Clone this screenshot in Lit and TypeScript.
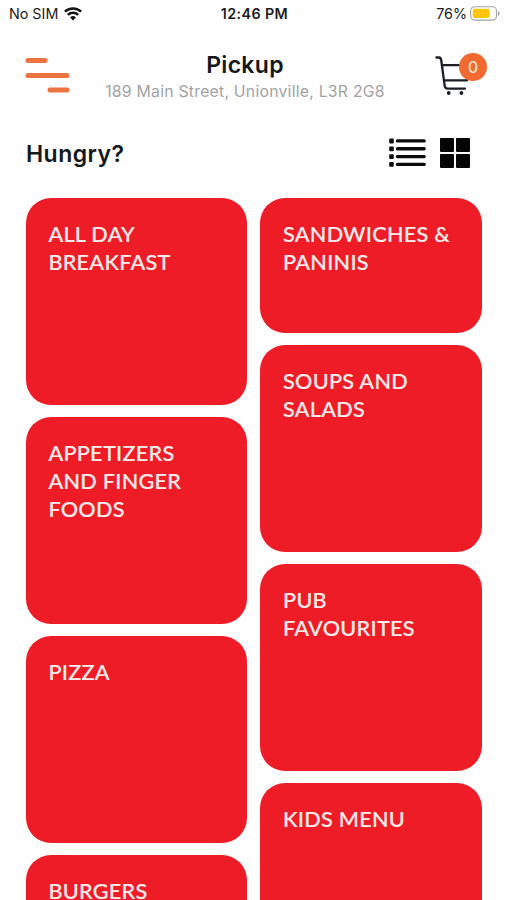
import { LitElement, html, css, svg } from "lit";
import { customElement, property } from "lit/decorators.js";
import { classMap } from "lit/directives/class-map.js";

interface Category {
  lines: string[];
  short?: boolean;
}

const LEFT: Category[] = [
  { lines: ["ALL DAY", "BREAKFAST"] },
  { lines: ["APPETIZERS", "AND FINGER", "FOODS"] },
  { lines: ["PIZZA"] },
  { lines: ["BURGERS"] },
];

const RIGHT: Category[] = [
  { lines: ["SANDWICHES &", "PANINIS"], short: true },
  { lines: ["SOUPS AND", "SALADS"] },
  { lines: ["PUB", "FAVOURITES"] },
  { lines: ["KIDS MENU"] },
];

@customElement("status-bar")
class StatusBar extends LitElement {
  static styles = css`
    :host {
      display: grid;
      grid-template-columns: 1fr auto 1fr;
      align-items: center;
      height: 27px;
      padding: 0 7px 0 9px;
      font: 400 14.3px/27px Inter, sans-serif;
      color: #1c1c1e;
    }
    .side { display: flex; align-items: center; gap: 6px; }
    .end { justify-content: flex-end; gap: 3px; }
    .time { font-weight: 600; letter-spacing: 0.4px; }
    svg { display: block; }
  `;
  render() {
    return html`
      <div class="side">
        <span>No SIM</span>
        <svg width="18" height="14" viewBox="0 0 18 14" fill="none" stroke="#111" stroke-width="2.5">
          <path d="M.9 4.7a11.6 11.6 0 0 1 16.2 0" />
          <path d="M3.8 7.9a7.5 7.5 0 0 1 10.4 0" />
          <path d="M9 13.4 6.1 10.4a4.2 4.2 0 0 1 5.8 0Z" fill="#111" stroke="none" />
        </svg>
      </div>
      <span class="time">12:46 PM</span>
      <div class="side end">
        <span>76%</span>
        <svg width="30" height="15" viewBox="0 0 30 15">
          <rect x=".7" y=".7" width="25.8" height="13.4" rx="4" fill="#fff" stroke="#a3a3a3" stroke-width="1.1" />
          <rect x="2.7" y="2.7" width="17" height="9.4" rx="2" fill="#fbc60c" />
          <path d="M28 5v5c2-.9 2-4.1 0-5Z" fill="#999" />
        </svg>
      </div>
    `;
  }
}

@customElement("category-card")
class CategoryCard extends LitElement {
  @property({ attribute: false }) category!: Category;
  static styles = css`
    :host { display: block; }
    .card {
      box-sizing: border-box;
      height: 206.5px;
      padding: 22.3px 0 0 22.7px;
      border-radius: 25px;
      background: #ed1c26;
      color: #ffeceb;
      font: 500 21.6px/28px Lato, sans-serif;
      letter-spacing: 0.3px;
      -webkit-text-stroke: 0.2px #ffeceb;
      white-space: nowrap;
    }
    .short { height: 134.5px; }
    .line { display: block; }
  `;
  render() {
    return html`<div class=${classMap({ card: true, short: !!this.category.short })}>
      ${this.category.lines.map((l) => html`<span class="line">${l}</span>`)}
    </div>`;
  }
}

@customElement("app-root")
class AppRoot extends LitElement {
  static styles = css`
    :host {
      display: block;
      height: 900px;
      overflow: hidden;
      background: #fefefe;
      font-family: Inter, sans-serif;
    }
    svg { display: block; }
    .header {
      display: grid;
      grid-template-columns: 70px 1fr 70px;
      height: 84px;
      padding: 0 17px 0 0;
    }
    .menu { padding: 30px 0 0 25px; }
    .title { padding-top: 24px; text-align: center; white-space: nowrap; }
    h1 { margin: 0; font: 600 23px/29px Inter, sans-serif; letter-spacing: 0.3px; color: #15171a; }
    .address { font-size: 15.8px; line-height: 24px; letter-spacing: 0.23px; color: #a3a3a3; }
    .cart { position: relative; padding: 29px 0 0 15px; }
    .badge {
      position: absolute;
      top: 26px;
      right: 3px;
      width: 28px;
      height: 28px;
      border-radius: 50%;
      background: #f26a31;
      color: #fff3ea;
      font-size: 16px;
      line-height: 28px;
      text-align: center;
    }
    .bar {
      display: flex;
      align-items: center;
      height: 84px;
      padding: 0 37.5px 0 26px;
    }
    h2 { flex: 1; margin: 0; padding-top: 1px; font: 600 23px/30px Inter, sans-serif; letter-spacing: 0.45px; color: #15171a; }
    .views { display: flex; gap: 13.5px; }
    .columns {
      display: grid;
      grid-template-columns: 1fr 1fr;
      gap: 13px;
      padding: 3px 25px 0 25.7px;
    }
    .column { display: flex; flex-direction: column; gap: 12.5px; }
  `;
  render() {
    return html`
      <status-bar></status-bar>
      <div class="header">
        <div class="menu">
          <svg width="46" height="38" viewBox="0 0 46 38" stroke="#ed7340" stroke-width="5" stroke-linecap="round">
            <path d="M3 3.5H20M3 18.5H42M25 33H42" />
          </svg>
        </div>
        <div class="title">
          <h1>Pickup</h1>
          <div class="address">189 Main Street, Unionville, L3R 2G8</div>
        </div>
        <div class="cart">
          <svg width="42" height="42" viewBox="0 0 42 42" fill="none" stroke="#1b1f24" stroke-width="2.3" stroke-linecap="round" stroke-linejoin="round">
            <path d="M1.4 1.5H4Q5.8 1.6 6.2 4L9.7 29.9Q10.1 32.6 12.6 32.6H30" />
            <path d="M7 9.2H34M9.2 24.4H32L34 9.2" />
            <circle cx="13.7" cy="37" r="1.9" fill="#1b1f24" stroke="none" />
            <circle cx="26.4" cy="37" r="1.9" fill="#1b1f24" stroke="none" />
          </svg>
          <span class="badge">0</span>
        </div>
      </div>
      <div class="bar">
        <h2>Hungry?</h2>
        <div class="views">
          <svg width="37" height="30" viewBox="0 0 37 30" fill="#0b0b0d">
            ${[0.6, 8.4, 16.2, 24].map(
              (y) => svg`<rect x="0.2" y=${y} width="4.6" height="4.8" rx="1" /><rect x="6.8" y=${y + 0.7} width="30" height="3.3" rx="1.6" />`
            )}
          </svg>
          <svg width="30" height="30" viewBox="0 0 30 30" fill="#050505">
            ${[0, 16].map((x) => [0, 16].map((y) => svg`<rect x=${x} y=${y} width="14" height="14" rx="1" />`))}
          </svg>
        </div>
      </div>
      <div class="columns">
        ${[LEFT, RIGHT].map(
          (col) => html`<div class="column">
            ${col.map((c) => html`<category-card .category=${c}></category-card>`)}
          </div>`
        )}
      </div>
    `;
  }
}
